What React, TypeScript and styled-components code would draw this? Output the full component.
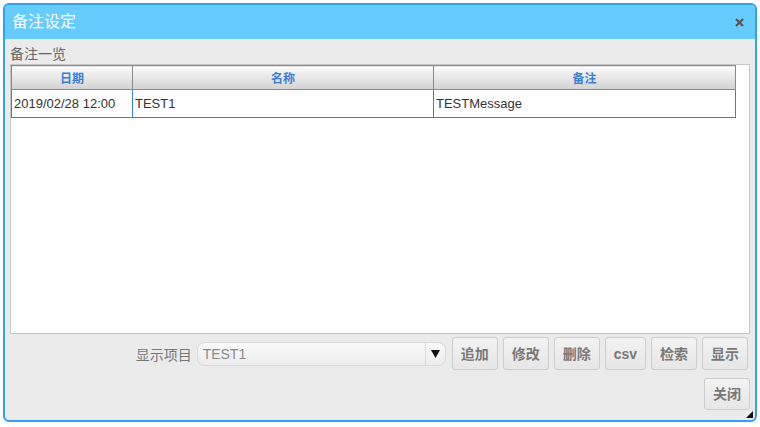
import React from "react";
import styled, { createGlobalStyle } from "styled-components";

const Global = createGlobalStyle`
  html, body { margin: 0; padding: 0; background: #ffffff; }
  body { font-family: "Liberation Sans", "Noto Sans CJK SC", sans-serif; }
  * { box-sizing: border-box; }
`;

const CJK = `"Liberation Sans", "Noto Sans CJK SC", sans-serif`;

const Dialog = styled.div`
  margin: 3px 0 0 3px;
  width: 754px;
  height: 419px;
  border: 2px solid #2fa0f2;
  border-radius: 6px;
  background: #ebebeb;
  display: flex;
  flex-direction: column;
  overflow: hidden;
  position: relative;
`;

const TitleBar = styled.div`
  height: 34px;
  flex: none;
  background: #66ccff;
  display: flex;
  align-items: center;
  justify-content: space-between;
  padding: 0 11px 0 7px;
`;

const Title = styled.span`
  color: #ffffff;
  font-family: ${CJK};
  font-size: 16px;
  line-height: 1;
`;

const CloseX = styled.svg`
  width: 9px;
  height: 9px;
  display: block;
`;

const Body = styled.div`
  flex: 1;
  display: flex;
  flex-direction: column;
  padding: 0 5px;
`;

const SectionLabel = styled.div`
  height: 25px;
  display: flex;
  align-items: center;
  padding-top: 2px;
  color: #666666;
  font-family: ${CJK};
  font-size: 14px;
`;

const GridBox = styled.div`
  height: 270px;
  background: #ffffff;
  border: 1px solid #c6c6c6;
  overflow: hidden;
`;

const Table = styled.table`
  border-collapse: collapse;
  table-layout: fixed;
  width: 724px;
`;

const Th = styled.th`
  height: 24px;
  padding: 0;
  border: 1px solid #8a8a8a;
  background: linear-gradient(#fbfbfb, #d2d2d2);
  color: #3a80d8;
  font-family: ${CJK};
  font-weight: bold;
  font-size: 12px;
  text-align: center;
`;

const Td = styled.td`
  height: 28px;
  padding: 0 0 0 2px;
  border: 1px solid #3b7fd6;
  border-top: none;
  color: #333333;
  font-family: "Liberation Sans", sans-serif;
  font-size: 13px;
  white-space: nowrap;
  overflow: hidden;
`;

const ToolRow = styled.div`
  margin-top: 3px;
  height: 33px;
  display: flex;
  align-items: center;
  justify-content: flex-end;
  padding-right: 2px;
`;

const FieldLabel = styled.span`
  color: #777777;
  font-family: ${CJK};
  font-size: 14px;
  margin-right: 5px;
`;

const Select = styled.div`
  width: 249px;
  height: 24px;
  border: 1px solid #d9d9d9;
  border-radius: 8px;
  background: linear-gradient(#fafafa, #ececec);
  display: flex;
  align-items: center;
  margin-right: 6px;
`;

const SelectValue = styled.span`
  flex: 1;
  padding-left: 5px;
  color: #8a8a8a;
  font-family: "Liberation Sans", sans-serif;
  font-size: 14px;
`;

const SelectArrow = styled.span`
  width: 20px;
  height: 100%;
  border-left: 1px solid #dcdcdc;
  display: flex;
  align-items: center;
  justify-content: center;
`;

const Button = styled.button<{ $gap?: number }>`
  height: 33px;
  padding: 0 8px;
  margin-left: ${(p) => p.$gap ?? 5}px;
  border: 1px solid #cdcdcd;
  border-radius: 3px;
  background: linear-gradient(#f3f3f3, #e6e6e6);
  color: #787878;
  font-family: ${CJK};
  font-weight: bold;
  font-size: 14px;
  line-height: 1;
  cursor: pointer;
`;

const CloseRow = styled.div`
  margin-top: 8px;
  display: flex;
  justify-content: flex-end;
  padding-right: 0;
`;

const CloseButton = styled(Button)`
  height: 32px;
`;

const Grip = styled.svg`
  position: absolute;
  right: 2px;
  bottom: 2px;
  width: 7px;
  height: 7px;
`;

const rows = [{ date: "2019/02/28 12:00", name: "TEST1", note: "TESTMessage" }];

export default function App() {
  return (
    <>
      <Global />
      <Dialog>
        <TitleBar>
          <Title>备注设定</Title>
          <CloseX viewBox="0 0 9 9">
            <path d="M1 1L8 8M8 1L1 8" stroke="#555555" strokeWidth="2.2" />
          </CloseX>
        </TitleBar>
        <Body>
          <SectionLabel>备注一览</SectionLabel>
          <GridBox>
            <Table>
              <colgroup>
                <col style={{ width: 121 }} />
                <col style={{ width: 301 }} />
                <col style={{ width: 302 }} />
              </colgroup>
              <thead>
                <tr>
                  <Th>日期</Th>
                  <Th>名称</Th>
                  <Th>备注</Th>
                </tr>
              </thead>
              <tbody>
                {rows.map((r) => (
                  <tr key={r.date}>
                    <Td>{r.date}</Td>
                    <Td>{r.name}</Td>
                    <Td>{r.note}</Td>
                  </tr>
                ))}
              </tbody>
            </Table>
          </GridBox>
          <ToolRow>
            <FieldLabel>显示项目</FieldLabel>
            <Select>
              <SelectValue>TEST1</SelectValue>
              <SelectArrow>
                <svg width="9" height="8" viewBox="0 0 9 8">
                  <path d="M0 0H9L4.5 8Z" fill="#111111" />
                </svg>
              </SelectArrow>
            </Select>
            <Button $gap={0}>追加</Button>
            <Button>修改</Button>
            <Button>删除</Button>
            <Button>csv</Button>
            <Button>检索</Button>
            <Button>显示</Button>
          </ToolRow>
          <CloseRow>
            <CloseButton $gap={0}>关闭</CloseButton>
          </CloseRow>
        </Body>
        <Grip viewBox="0 0 7 7">
          <path d="M7 0V7H0Z" fill="#111111" />
        </Grip>
      </Dialog>
    </>
  );
}
